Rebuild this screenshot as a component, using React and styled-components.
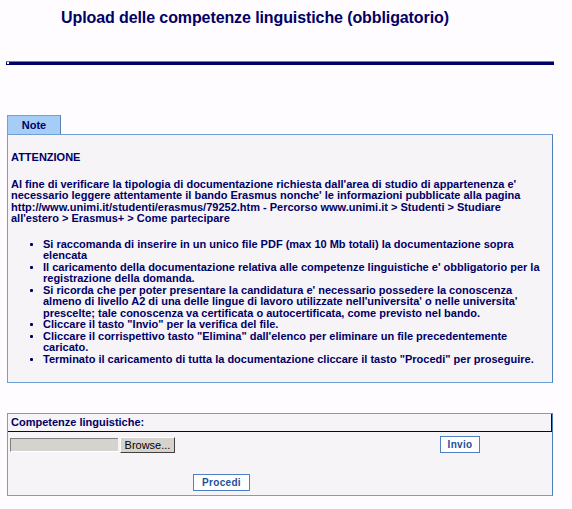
import React from 'react';
import styled, {createGlobalStyle} from "styled-components";

const GlobalStyle = createGlobalStyle`
    body {
        margin: 0;
        background: #fefcfe;
        font-family: "Liberation Sans", Arial, sans-serif;
        color: #000066;
    }
`

const Page = styled.div`
    width: 572px;
    padding: 10px 0 0 6px;
    box-sizing: border-box;
`

const Title = styled.h1`
    margin: 0;
    width: 498px;
    text-align: center;
    font-size: 16px;
    font-weight: 700;
    line-height: 16px;
    letter-spacing: -0.1px;
    color: #000066;
`

const Rule = styled.div`
    margin-top: 35px;
    width: 548px;
    height: 4px;
    background: #000066;
    border-top: 1px solid #6a78c8;
    box-sizing: border-box;
    position: relative;

    &::before {
        content: "";
        position: absolute;
        left: 1px;
        top: 0;
        width: 2px;
        height: 2px;
        background: #ffffff;
    }
`

const TabBar = styled.div`
    margin-top: 50px;
    display: flex;
    padding-left: 1px;
`

const Tab = styled.div`
    width: 54px;
    height: 19px;
    box-sizing: border-box;
    background: #a6cdf6;
    border: 1px solid #7b9fcc;
    border-right-color: #5a7fb4;
    border-bottom: none;
    font-size: 11px;
    font-weight: 700;
    line-height: 18px;
    text-align: center;
    color: #000066;
`

const Panel = styled.div`
    margin-left: 1px;
    width: 546px;
    box-sizing: border-box;
    background: #f6f4f7;
    border: 1px solid #6f9fd4;
    border-right-color: #4e7fb8;
`

const NoteBody = styled.div`
    padding: 17px 4px 17px 3px;
    font-size: 11px;
    font-weight: 700;
    line-height: 11.5px;
    white-space: nowrap;
`

const Para = styled.p`
    margin: 0 0 ${props => props.gap}px 0;
`

const List = styled.ul`
    margin: 0;
    padding: 0 0 0 9px;
    list-style: none;
`

const Item = styled.li`
    display: flex;
`

const Bullet = styled.span`
    flex: none;
    width: 23px;
    padding-left: 10px;
    box-sizing: border-box;

    &::before {
        content: "";
        display: inline-block;
        width: 3px;
        height: 3px;
        border-radius: 1px;
        background: #000066;
        vertical-align: 2px;
    }
`

const FormPanel = styled(Panel)`
    margin-top: 30px;
    height: 83px;
`

const FormHeader = styled.div`
    height: 17px;
    border-bottom: 1px solid #000066;
    border-right: 1px solid #000066;
    padding-left: 3px;
    font-size: 11px;
    font-weight: 700;
    line-height: 17px;
`

const FileRow = styled.div`
    display: flex;
    align-items: center;
    padding: 4px 0 0 2px;
    height: 17px;
`

const FileField = styled.div`
    width: 108px;
    height: 14px;
    box-sizing: border-box;
    background: #d6d3ce;
    border-top: 1px solid #808080;
    border-left: 1px solid #808080;
    border-bottom: 1px solid #ffffff;
`

const BrowseButton = styled.div`
    margin-left: 2px;
    width: 55px;
    height: 16px;
    box-sizing: border-box;
    background: #d6d3ce;
    border: 1px solid #ffffff;
    border-right-color: #404040;
    border-bottom-color: #404040;
    font-size: 11px;
    line-height: 14px;
    text-align: center;
    color: #000000;
`

const ActionButton = styled.div`
    margin-left: ${props => props.left}px;
    margin-top: ${props => props.top}px;
    width: ${props => props.width}px;
    height: 17px;
    box-sizing: border-box;
    background: #ffffff;
    border: 1px solid #4f80c4;
    font-size: 10px;
    font-weight: 700;
    line-height: 15px;
    letter-spacing: 0.3px;
    text-align: center;
    color: #1d4f9e;
`

const bullets = [
    ["Si raccomanda di inserire in un unico file PDF (max 10 Mb totali) la documentazione sopra", "elencata"],
    ["Il caricamento della documentazione relativa alle competenze linguistiche e' obbligatorio per la", "registrazione della domanda."],
    ["Si ricorda che per poter presentare la candidatura e' necessario possedere la conoscenza", "almeno di livello A2 di una delle lingue di lavoro utilizzate nell'universita' o nelle universita'", "prescelte; tale conoscenza va certificata o autocertificata, come previsto nel bando."],
    ["Cliccare il tasto \"Invio\" per la verifica del file."],
    ["Cliccare il corrispettivo tasto \"Elimina\" dall'elenco per eliminare un file precedentemente", "caricato."],
    ["Terminato il caricamento di tutta la documentazione cliccare il tasto \"Procedi\" per proseguire."],
];

const withBreaks = (lines) => lines.map((line, i) => (
    <React.Fragment key={i}>{i > 0 && <br/>}{line}</React.Fragment>
));

const App = () => (
    <Page>
        <GlobalStyle/>
        <Title>Upload delle competenze linguistiche (obbligatorio)</Title>
        <Rule/>
        <TabBar>
            <Tab>Note</Tab>
        </TabBar>
        <Panel>
            <NoteBody>
                <Para gap={15}>ATTENZIONE</Para>
                <Para gap={14}>
                    {withBreaks([
                        "Al fine di verificare la tipologia di documentazione richiesta dall'area di studio di appartenenza e'",
                        "necessario leggere attentamente il bando Erasmus nonche' le informazioni pubblicate alla pagina",
                        "http://www.unimi.it/studenti/erasmus/79252.htm - Percorso www.unimi.it > Studenti > Studiare",
                        "all'estero > Erasmus+ > Come partecipare",
                    ])}
                </Para>
                <List>
                    {bullets.map((lines, i) => (
                        <Item key={i}>
                            <Bullet/>
                            <span>{withBreaks(lines)}</span>
                        </Item>
                    ))}
                </List>
            </NoteBody>
        </Panel>
        <FormPanel>
            <FormHeader>Competenze linguistiche:</FormHeader>
            <FileRow>
                <FileField/>
                <BrowseButton>Browse...</BrowseButton>
                <ActionButton left={265} top={0} width={40}>Invio</ActionButton>
            </FileRow>
            <ActionButton left={185} top={21} width={57}>Procedi</ActionButton>
        </FormPanel>
    </Page>
);

export default App;
